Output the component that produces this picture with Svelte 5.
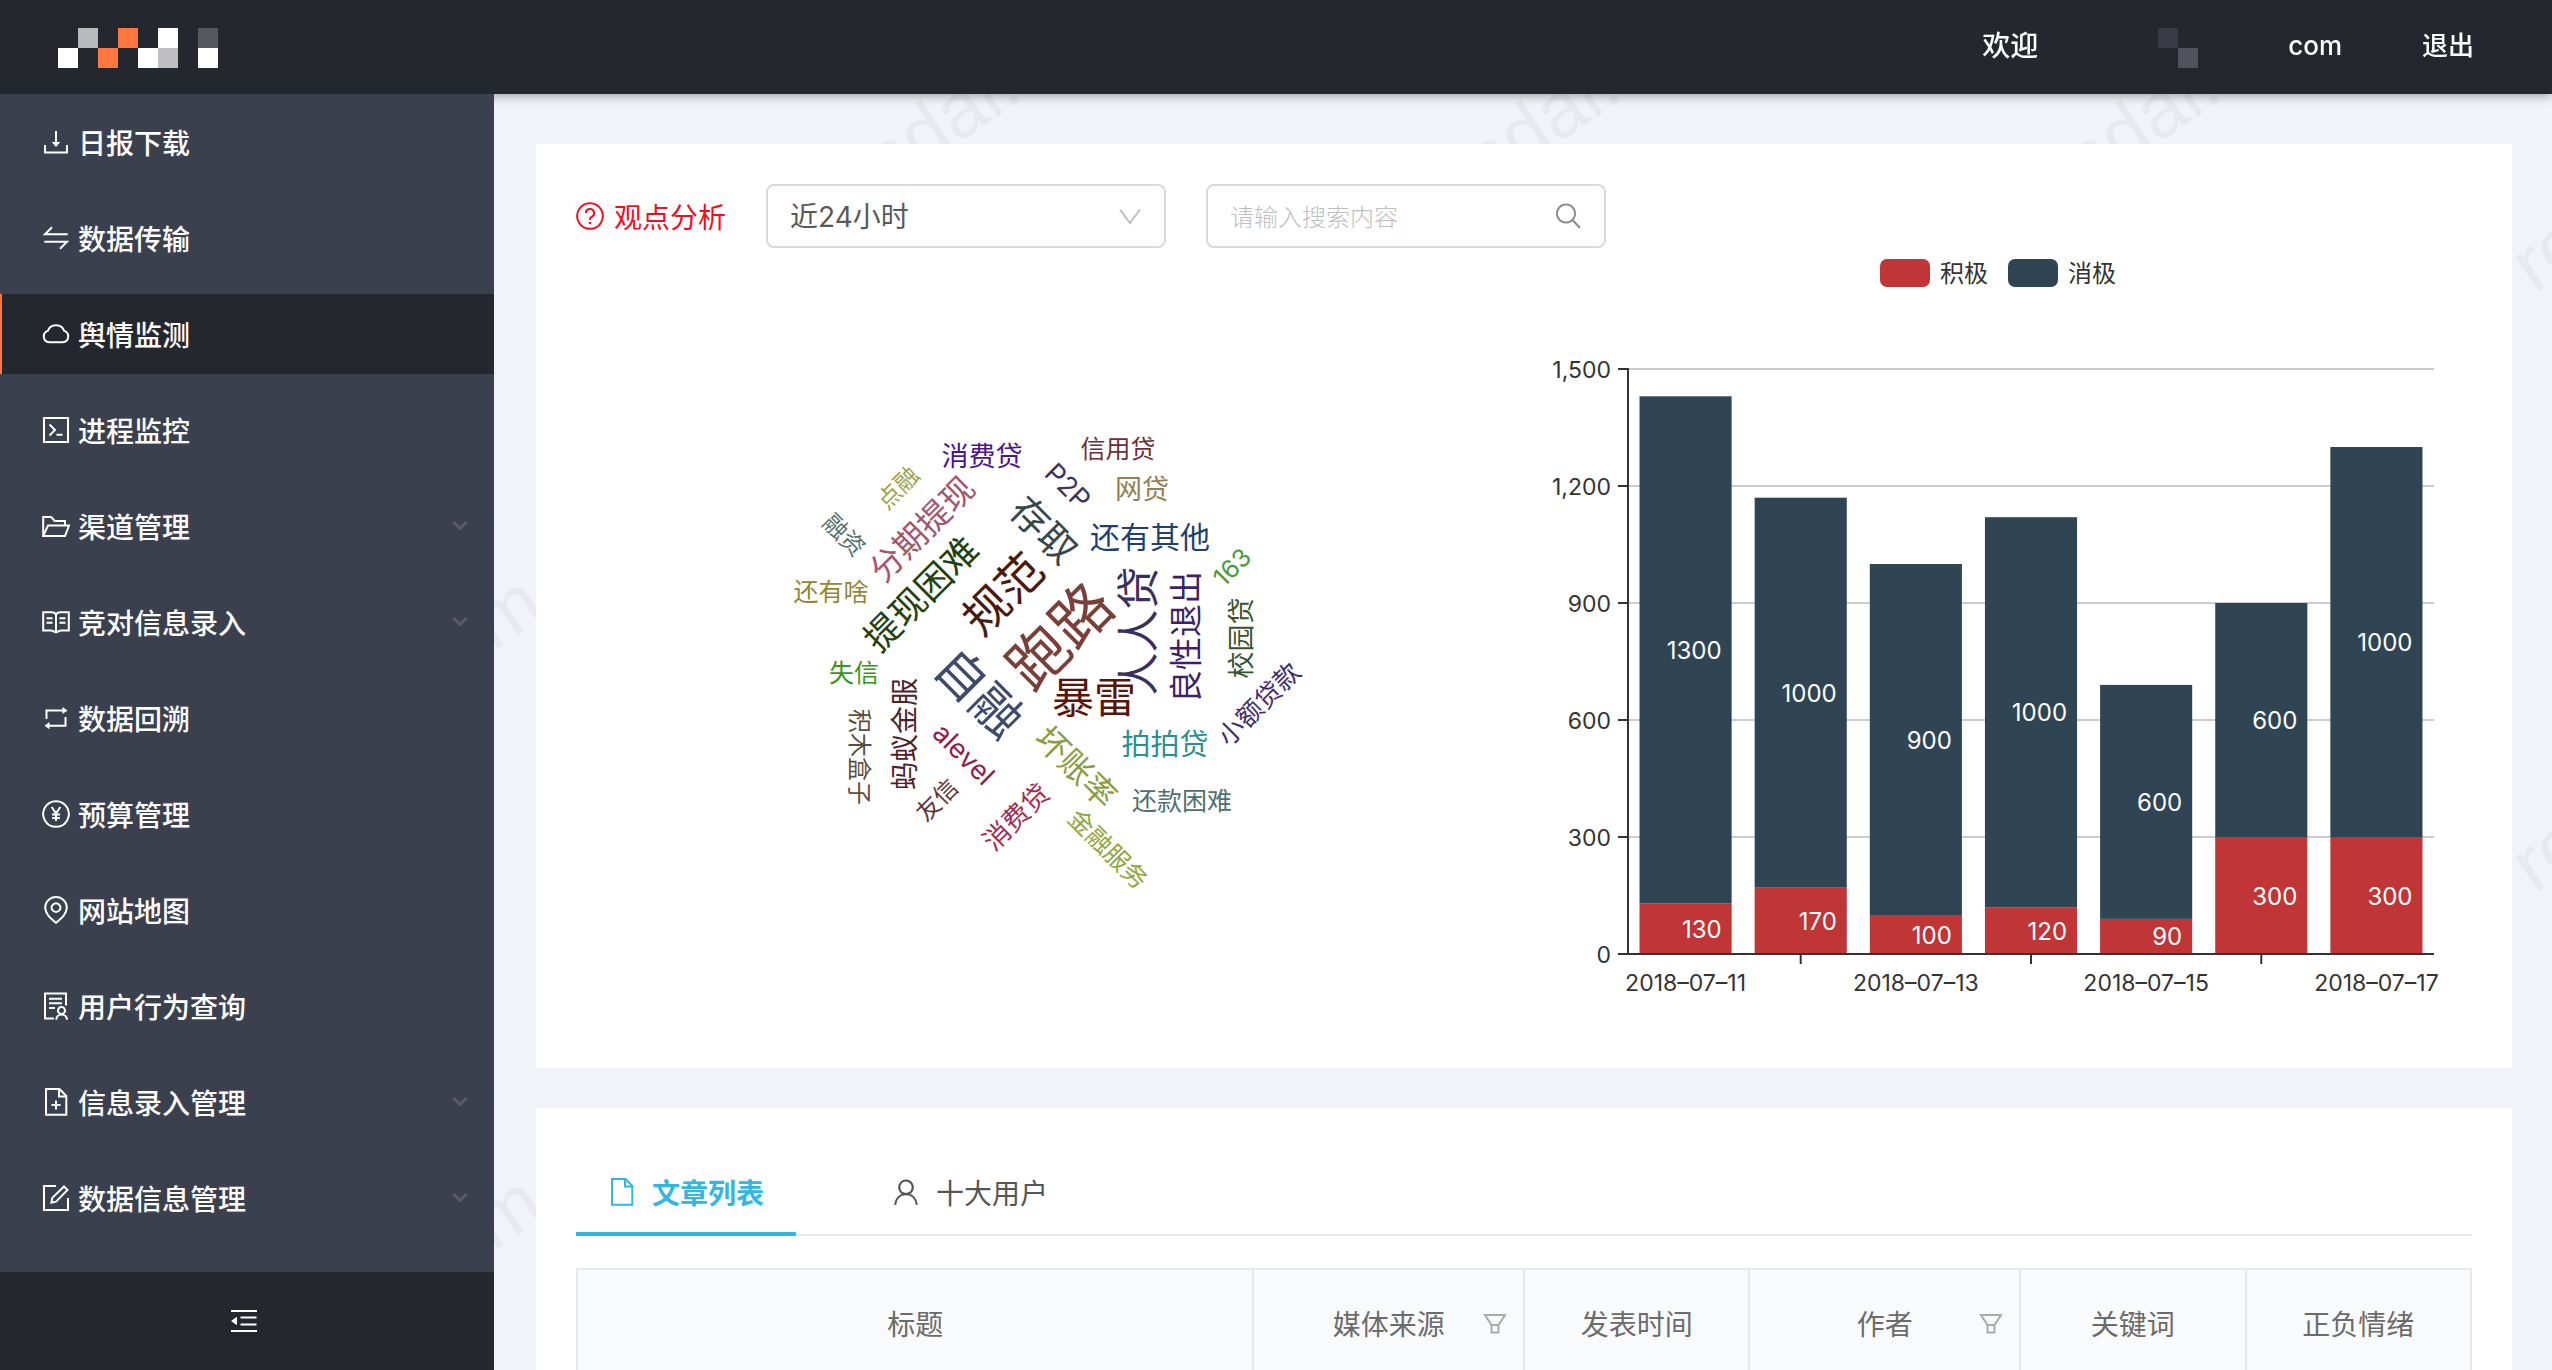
<script>
    const icons = {
        download: { line: 'M14 3v13M3 17v7.5h22V17', fill: 'M9.8 14h8.4L14 19z' },
        swap: { line: 'M10 3.2L3 10.3h22.7M18 24.8l7-7.1H2.3' },
        cloud: { line: 'M7.2 22.2A5.8 5.8 0 0 1 5.8 10.9A8.8 8.8 0 0 1 22.2 10.9A5.8 5.8 0 0 1 20.8 22.2Z' },
        code: { line: 'M2 2h24v24H2zM7.5 8.5L13 14l-5.5 5.5M14.5 18.7h6' },
        folder: { line: 'M1.2 24V5h8l3.5 4H23v4.5M1.2 24L6 13.5h21L23 24z' },
        book: { line: 'M1.2 4.3H10a5 5 0 0 1 4 2a5 5 0 0 1 4-2h8.8v18.2H18.5L14 24.5l-4.5-2H1.2zM14 6v18M4.5 10.3h6M4.5 14.7h6M17.5 10.3h6M17.5 14.7h6' },
        retweet: { line: 'M4.5 15V6.5h17M23.5 13v8.7h-17', fill: 'M20.5 3l5 3.5l-5 3.5zM7.5 18l-5 3.7l5 3.5z' },
        money: { line: 'M14 1.2a12.8 12.8 0 1 0 .01 0zM9.7 7L14 13.5L18.3 7M14 13.5V21M10 14.5h8M10 18h8' },
        pin: { line: 'M14 26.8C9 22.5 3.2 18 3.2 11.8a10.8 10.8 0 0 1 21.6 0C24.8 18 19 22.5 14 26.8zM14 7.2a4.4 4.4 0 1 0 .01 0z' },
        audit: { line: 'M12 26.5H3v-25h21v12M7 6.7h13M7 11.3h13M7 16h6M19.5 15a3.5 3.5 0 1 0 .01 0zM14.2 27.8c.5-7 10.3-7 10.8 0' },
        fileAdd: { line: 'M4 1h13.5L24.3 8v18.8H4zM17 1.5V8.5h7M14 12.5v9M9.5 17h9' },
        form: { line: 'M14 2H2v24h24V14M22 2.5L25.5 6L14 17.7l-4.6 1l.9-4.8z' },
        fold: { line: 'M1 4h26M10.5 10.6h16M10.5 17.4h16M1 24h26', fill: 'M1 14l6-4.3v8.6z' },
        question: { line: 'M14 1.2a12.8 12.8 0 1 0 .01 0zM9.9 11a4.1 4.1 0 1 1 5.7 3.8c-1.1.5-1.6 1.2-1.6 2.4v.8', fill: 'M12.8 19.8h2.4v2.4h-2.4z' },
        file: { line: 'M4 1h13.5L24.3 8v18.8H4zM17 1.5V8.5h7' },
        user: { line: 'M14 2.5a6.8 6.8 0 1 0 .01 0zM3.2 26.8C4 20 8.3 16.2 14 16.2S24 20 24.8 26.8' },
        filter: { line: 'M4 6h20l-6.5 10h-7zM10.5 16v7.5h7V16' },
        search: { line: 'M12 2.5a9 9 0 1 0 .01 0zM18.5 18l7.5 8' },
        down: { line: 'M4 7.5L14 21L24 7.5' }
    };

    const menu = [
        { icon: 'download', label: '日报下载' },
        { icon: 'swap', label: '数据传输' },
        { icon: 'cloud', label: '舆情监测', active: true },
        { icon: 'code', label: '进程监控' },
        { icon: 'folder', label: '渠道管理', group: true },
        { icon: 'book', label: '竞对信息录入', group: true },
        { icon: 'retweet', label: '数据回溯' },
        { icon: 'money', label: '预算管理' },
        { icon: 'pin', label: '网站地图' },
        { icon: 'audit', label: '用户行为查询' },
        { icon: 'fileAdd', label: '信息录入管理', group: true },
        { icon: 'form', label: '数据信息管理', group: true }
    ];

    // column, row, colour of each block
    const logo = [
        [1, 0, '#b8babd'], [3, 0, '#ff7640'], [5, 0, '#fff'], [7, 0, '#54575e'],
        [0, 1, '#fff'], [2, 1, '#ff7640'], [4, 1, '#fff'], [5, 1, '#bfbfc1'], [7, 1, '#fff']
    ];

    // text, centre x, centre y, size, angle, colour
    const words = [
        ['跑路', 484, 388, 60, -45, '#7a4038'],
        ['自融', 403, 445, 50, 45, '#3e4b6c'],
        ['规范', 427, 346, 46, -45, '#4a1a10'],
        ['暴雷', 518, 450, 42, 0, '#5a1408'],
        ['人人贷', 563, 383, 43, -90, '#3a3060'],
        ['良性退出', 610, 389, 33, -90, '#3f1f68'],
        ['存取', 468, 282, 38, 45, '#37474b'],
        ['还有其他', 574, 289, 30, 0, '#1f3f6e'],
        ['提现困难', 345, 346, 36, -45, '#23400f'],
        ['分期提现', 346, 281, 33, -45, '#a3566f'],
        ['消费贷', 406, 208, 27, 0, '#4b1590'],
        ['信用贷', 542, 201, 25, 0, '#6d2e37'],
        ['网贷', 566, 241, 27, 0, '#93804f'],
        ['P2P', 492, 238, 27, 45, '#3a3262'],
        ['点融', 322, 240, 24, -45, '#9ca34a'],
        ['融资', 268, 287, 24, 45, '#55706b'],
        ['还有啥', 255, 344, 25, 0, '#97862f'],
        ['失信', 278, 425, 25, 0, '#3a9420'],
        ['蚂蚁金服', 329, 486, 28, -90, '#4d2229'],
        ['积木盒子', 284, 509, 24, 90, '#5d4d3c'],
        ['alevel', 388, 506, 27, 45, '#8d2049'],
        ['友信', 361, 552, 24, -45, '#5f3436'],
        ['消费贷', 440, 569, 27, -45, '#a32c58'],
        ['坏账率', 500, 519, 33, 45, '#8c9c42'],
        ['金融服务', 532, 601, 25, 45, '#8fa63b'],
        ['还款困难', 606, 553, 25, 0, '#4e706f'],
        ['拍拍贷', 589, 497, 29, 0, '#2a8f90'],
        ['小额贷款', 683, 456, 26, -45, '#3d2d72'],
        ['校园贷', 665, 390, 27, -90, '#37532f'],
        ['163', 656, 319, 25, -45, '#4a9a3f']
    ];

    const days = [
        { date: '2018–07–11', good: 130, bad: 1300 },
        { date: '2018–07–12', good: 170, bad: 1000 },
        { date: '2018–07–13', good: 100, bad: 900 },
        { date: '2018–07–14', good: 120, bad: 1000 },
        { date: '2018–07–15', good: 90, bad: 600 },
        { date: '2018–07–16', good: 300, bad: 600 },
        { date: '2018–07–17', good: 300, bad: 1000 }
    ];

    const ticks = [0, 300, 600, 900, 1200, 1500];
    const left = 104;
    const right = 910;
    const base = 706;
    const step = (right - left) / days.length;
    const bar = step * 0.8;

    const h = (value) => value * 585 / 1500;
    const y = (value) => base - h(value);
    const centre = (i) => left + step * (i + 0.5);

    const columns = [
        { title: '标题', width: 300 },
        { title: '媒体来源', width: 120, filter: true },
        { title: '发表时间', width: 100 },
        { title: '作者', width: 120, filter: true },
        { title: '关键词', width: 100 },
        { title: '正负情绪', width: 100 }
    ];
    const total = columns.reduce((sum, column) => sum + column.width, 0);
</script>

{#snippet icon(name)}
    <svg class="icon" viewBox="0 0 28 28" aria-hidden="true">
        <path class="line" d={icons[name].line} />
        {#if icons[name].fill}
            <path class="fill" d={icons[name].fill} />
        {/if}
    </svg>
{/snippet}

<div class="app">
    <header>
        <svg class="logo" viewBox="0 0 160 40" shape-rendering="crispEdges" aria-hidden="true">
            {#each logo as [col, row, color]}
                <rect x={col * 20} y={row * 20} width="20" height="20" fill={color} />
            {/each}
        </svg>
        <div class="account">
            <span>欢迎</span>
            <svg class="mask" viewBox="0 0 40 40" shape-rendering="crispEdges" aria-hidden="true">
                <rect width="20" height="20" fill="#383b44" />
                <rect x="20" y="20" width="20" height="20" fill="#50535c" />
            </svg>
            <span class="domain">com</span>
            <a class="logout" href="#logout">退出</a>
        </div>
    </header>

    <div class="body">
        <aside>
            <nav>
                {#each menu as item}
                    {#if item.group}
                        <button class="item" type="button">
                            {@render icon(item.icon)}
                            <span>{item.label}</span>
                            <svg class="chevron" viewBox="0 0 16 12" aria-hidden="true">
                                <path d="M1.5 2L8 8.5L14.5 2" />
                            </svg>
                        </button>
                    {:else}
                        <a class="item" class:active={item.active} href="#menu">
                            {@render icon(item.icon)}
                            <span>{item.label}</span>
                        </a>
                    {/if}
                {/each}
            </nav>
            <button class="fold" type="button" aria-label="收起">{@render icon('fold')}</button>
        </aside>

        <main>
            <svg class="watermark" aria-hidden="true">
                <pattern id="mark" x="200" y="-150" width="600" height="600" patternUnits="userSpaceOnUse">
                    <text transform="translate(40 350) rotate(-34)">renrendai.com</text>
                </pattern>
                <rect width="100%" height="100%" fill="url(#mark)" />
            </svg>

            <section class="card">
                <div class="controls">
                    <label class="heading" for="range">{@render icon('question')}观点分析</label>
                    <div class="field">
                        <select id="range">
                            <option>近24小时</option>
                        </select>
                        <span class="arrow">{@render icon('down')}</span>
                    </div>
                    <div class="field">
                        <input type="text" placeholder="请输入搜索内容" aria-label="搜索">
                        <button class="search" type="button" aria-label="搜索">{@render icon('search')}</button>
                    </div>
                </div>

                <div class="charts">
                    <svg class="cloud" viewBox="0 0 948 780">
                        {#each words as [text, x, y, size, angle, color]}
                            <text transform="translate({x} {y}) rotate({angle})" dy="0.36em" font-size={size} fill={color}>{text}</text>
                        {/each}
                    </svg>

                    <svg class="bars" viewBox="0 0 948 780">
                        <rect x="356" y="11" width="50" height="28" rx="7" fill="#c03536" />
                        <text class="legend" x="416" y="34">积极</text>
                        <rect x="484" y="11" width="50" height="28" rx="7" fill="#2f4554" />
                        <text class="legend" x="544" y="34">消极</text>

                        {#each ticks as tick}
                            {#if tick}
                                <line class="grid" x1={left} x2={right} y1={y(tick)} y2={y(tick)} />
                            {/if}
                            <line class="axis" x1={left - 10} x2={left} y1={y(tick)} y2={y(tick)} />
                            <text class="tick" x={left - 17} y={y(tick) + 9}>{tick.toLocaleString('en-US')}</text>
                        {/each}

                        {#each days as day, i}
                            <rect x={centre(i) - bar / 2} y={y(day.good)} width={bar} height={h(day.good)} fill="#c03536" />
                            <rect x={centre(i) - bar / 2} y={y(day.good + day.bad)} width={bar} height={h(day.bad)} fill="#2f4554" />
                            <text class="value" x={centre(i) + bar / 2 - 10} y={y(day.good / 2) + 9}>{day.good}</text>
                            <text class="value" x={centre(i) + bar / 2 - 10} y={y(day.good + day.bad / 2) + 9}>{day.bad}</text>
                            {#if i % 2}
                                <line class="axis" x1={centre(i)} x2={centre(i)} y1={base} y2={base + 10} />
                            {:else}
                                <text class="date" x={centre(i)} y={base + 37}>{day.date}</text>
                            {/if}
                        {/each}

                        <path class="axis" d="M{left} {y(1500) - 1}V{base}H{right}" />
                    </svg>
                </div>
            </section>

            <section class="card">
                <div class="tabs" role="tablist">
                    <button class="tab selected" type="button" role="tab" aria-selected="true">{@render icon('file')}文章列表</button>
                    <button class="tab" type="button" role="tab" aria-selected="false">{@render icon('user')}十大用户</button>
                </div>

                <table>
                    <colgroup>
                        {#each columns as column}
                            <col style="width: {column.width / total * 100}%">
                        {/each}
                    </colgroup>
                    <thead>
                        <tr>
                            {#each columns as column}
                                <th>
                                    <div class="cell">
                                        <span>{column.title}</span>
                                        {#if column.filter}
                                            <button class="filter" type="button" aria-label="筛选">{@render icon('filter')}</button>
                                        {/if}
                                    </div>
                                </th>
                            {/each}
                        </tr>
                    </thead>
                </table>
            </section>
        </main>
    </div>
</div>

<style>
    :global(body) {
        margin: 0;
    }

    .app {
        height: 100vh;
        display: flex;
        flex-direction: column;
        overflow: hidden;
        font-family: "Noto Sans CJK SC", sans-serif;
        font-size: 28px;
        line-height: 40px;
        color: #555;
    }

    .app :global(*) {
        box-sizing: border-box;
    }

    a {
        color: inherit;
        text-decoration: none;
    }

    button {
        border: 0;
        padding: 0;
        background: none;
        color: inherit;
        font: inherit;
        cursor: pointer;
    }

    .icon {
        width: 28px;
        height: 28px;
        flex: none;
        display: block;
    }

    .line {
        fill: none;
        stroke: currentColor;
        stroke-width: 2;
    }

    .fill {
        fill: currentColor;
    }

    header {
        height: 94px;
        flex: none;
        padding: 2px 78px 0 58px;
        display: flex;
        justify-content: space-between;
        align-items: center;
        background-color: #25272f;
        box-shadow: 0 2px 10px rgba(0, 0, 0, .35);
        color: #fff;
        font-family: Inter, "Noto Sans CJK SC", sans-serif;
        font-weight: 500;
        z-index: 1;
    }

    .logo {
        width: 160px;
    }

    .account {
        display: flex;
        align-items: center;
        padding-bottom: 4px;
    }

    .mask {
        width: 40px;
        margin: 4px 90px 0 120px;
    }

    .domain,
    .logout {
        font-size: 26px;
    }

    .logout {
        margin-left: 80px;
    }

    .body {
        flex: 1;
        min-height: 0;
        display: flex;
    }

    aside {
        width: 494px;
        flex: none;
        display: flex;
        flex-direction: column;
        background-color: #3b404f;
        color: #fff;
        font-weight: 500;
        z-index: 2;
    }

    nav {
        flex: 1;
        min-height: 0;
        padding-top: 8px;
        display: flex;
        flex-direction: column;
        gap: 16px;
        overflow: hidden;
    }

    .item {
        height: 80px;
        flex: none;
        padding: 0 26px 0 40px;
        border-left: 2px solid transparent;
        display: flex;
        align-items: center;
        gap: 8px;
        text-align: left;
    }

    .active {
        border-left-color: #ff7640;
        background-color: #25272f;
    }

    .chevron {
        width: 16px;
        margin-left: auto;
        fill: none;
        stroke: #5b5c60;
        stroke-width: 3;
    }

    .fold {
        height: 98px;
        flex: none;
        padding-right: 6px;
        display: flex;
        justify-content: center;
        align-items: center;
        background-color: #25272f;
    }

    main {
        position: relative;
        flex: 1;
        min-width: 0;
        padding: 50px 40px 40px 42px;
        display: flex;
        flex-direction: column;
        gap: 40px;
        overflow: auto;
        scrollbar-width: none;
        background-color: #f2f3f8;
    }

    .watermark {
        position: absolute;
        inset: 0;
        width: 100%;
        height: 100%;
        font-family: "Liberation Sans", sans-serif;
        font-size: 78px;
        fill: #e6e9ef;
    }

    .card {
        position: relative;
        padding: 40px;
        background-color: #fff;
    }

    .controls {
        display: flex;
        align-items: center;
        gap: 40px;
    }

    .heading {
        display: flex;
        align-items: center;
        gap: 10px;
        color: #f80b1e;
    }

    .field {
        position: relative;
        width: 400px;
    }

    select,
    input {
        display: block;
        width: 100%;
        height: 64px;
        padding: 2px 22px 0;
        border: 2px solid #d9d9d9;
        border-radius: 8px;
        background-color: #fff;
        font: inherit;
        font-family: Inter, "Noto Sans CJK SC", sans-serif;
        color: #595959;
        appearance: none;
    }

    input {
        font-size: 24px;
    }

    input::placeholder {
        color: #bfbfbf;
        font-weight: 300;
    }

    .arrow,
    .search {
        position: absolute;
        top: 18px;
        right: 22px;
        pointer-events: none;
    }

    .arrow {
        color: #bfbfbf;
    }

    .search {
        right: 24px;
        color: #8c8c8c;
    }

    .charts {
        display: flex;
        font-family: Inter, "Noto Sans CJK SC", sans-serif;
    }

    .cloud,
    .bars {
        flex: 1;
        min-width: 0;
    }

    .cloud text {
        text-anchor: middle;
    }

    .bars {
        font-size: 23px;
        fill: #333;
    }

    .legend {
        font-size: 24px;
    }

    .grid {
        stroke: #ccc;
        stroke-width: 2;
    }

    .axis {
        fill: none;
        stroke: #333;
        stroke-width: 2;
    }

    .tick {
        text-anchor: end;
    }

    .value {
        font-size: 24px;
        fill: #fff;
        text-anchor: end;
    }

    .date {
        text-anchor: middle;
    }

    .tabs {
        display: flex;
        gap: 64px;
        margin-bottom: 32px;
        box-shadow: inset 0 -2px #e8e8e8;
    }

    .tab {
        height: 88px;
        padding: 4px 32px 0;
        border-bottom: 4px solid transparent;
        display: flex;
        align-items: center;
        gap: 16px;
    }

    .selected {
        border-bottom-color: #31b7e2;
        color: #31b7e2;
        font-weight: 700;
    }

    table {
        width: 100%;
        table-layout: fixed;
        border-collapse: collapse;
    }

    th {
        height: 108px;
        padding: 0 14px;
        border: 2px solid #e8e8e8;
        background-color: #f9fafc;
        color: #6b6b6b;
        font-weight: 400;
    }

    .cell {
        display: grid;
        grid-template-columns: 1fr auto 1fr;
        align-items: center;
    }

    .cell span {
        grid-column: 2;
    }

    .filter {
        justify-self: end;
        color: #aaa;
    }
</style>
